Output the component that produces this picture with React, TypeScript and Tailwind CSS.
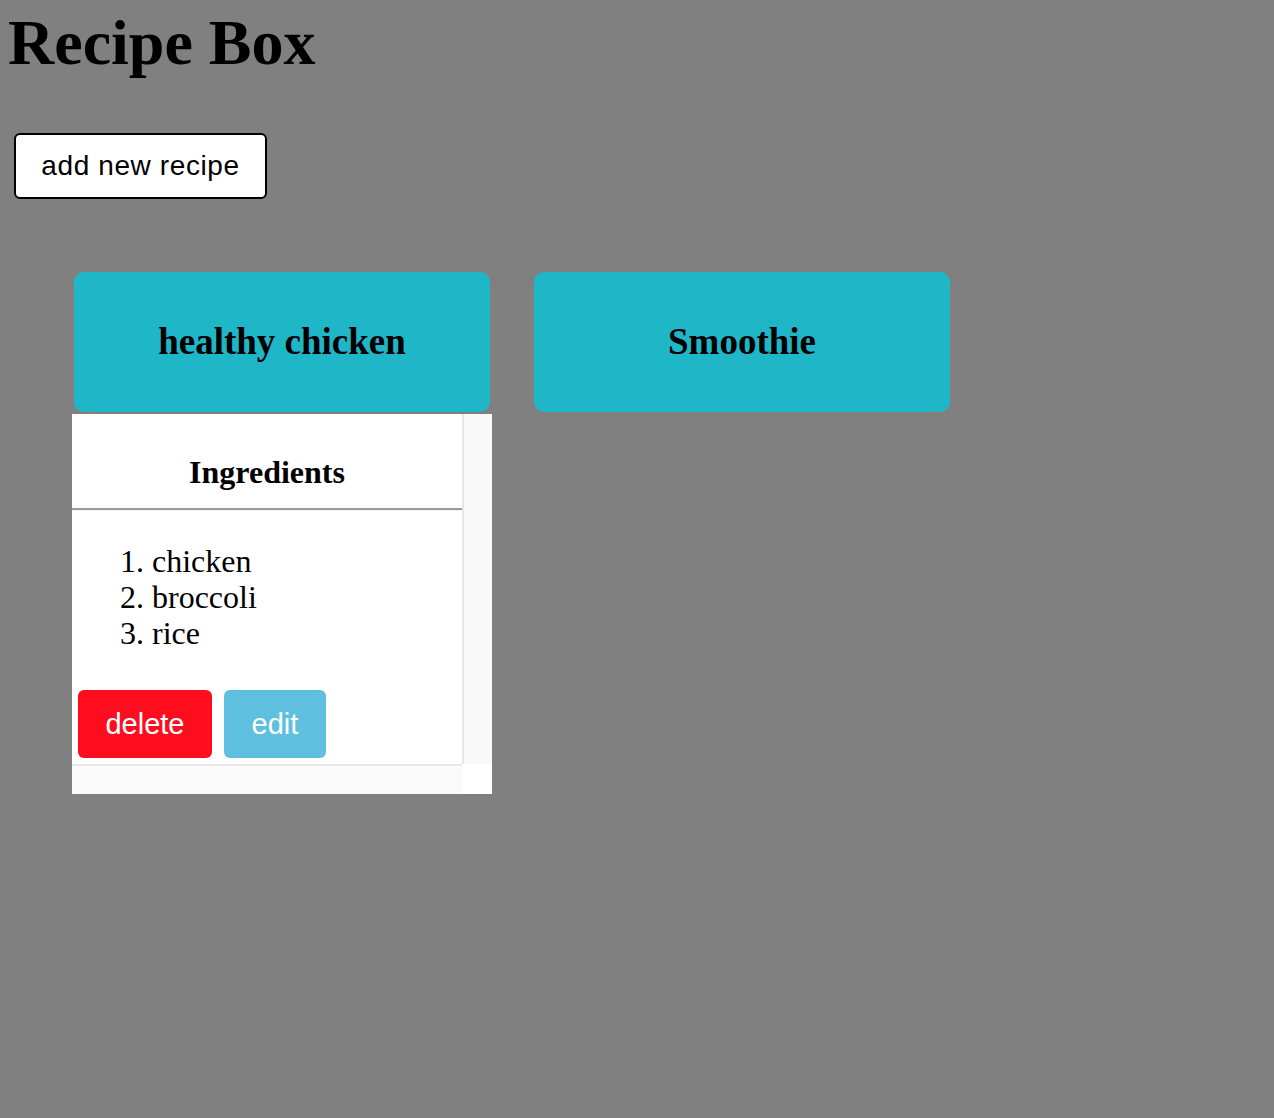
import React from 'react';

interface Recipe {
  id: number;
  name: string;
  ingredients: string[];
}

const recipes: Recipe[] = [
  { id: 1, name: 'healthy chicken', ingredients: ['chicken', 'broccoli', 'rice'] },
  { id: 2, name: 'Smoothie', ingredients: ['banana', 'milk', 'honey'] },
];

const serif = "font-['Liberation_Serif','Times_New_Roman',serif]";
const sans = "font-['Liberation_Sans',Arial,sans-serif]";

function RecipeCard({ recipe, open }: { recipe: Recipe; open: boolean }) {
  return (
    <div className="flex w-[416px] flex-col">
      <div className="flex h-[140px] items-center justify-center rounded-[10px] bg-[#1fb7c8]">
        <h2 className={`${serif} text-[37px] font-bold leading-[1.15] text-black`}>
          {recipe.name}
        </h2>
      </div>
      {open && (
        <div className="-mx-[2px] mt-[2px] flex h-[380px] flex-col bg-white">
          <div className="flex flex-1">
            {/* content */}
            <div className="flex w-[392px] flex-col border-r-2 border-[#e6e6e6] bg-white">
              <h3
                className={`${serif} border-b-2 border-[#9b9b9b] pt-[40px] pb-[18px] text-center text-[32px] font-bold leading-[36px] text-black`}
              >
                Ingredients
              </h3>
              <div className="h-px bg-[#f0f0f0]" />
              <ol
                className={`${serif} mt-[32px] list-decimal pl-[80px] text-[32px] leading-[36px] text-black`}
              >
                {recipe.ingredients.map((item) => (
                  <li key={item}>{item}</li>
                ))}
              </ol>
              <div className={`${sans} mt-[39px] flex gap-[12px] px-[6px]`}>
                <button className="flex h-[68px] w-[134px] items-center justify-center rounded-[6px] bg-[#ff0d1f] text-[29px] leading-[32px] text-white">
                  delete
                </button>
                <button className="flex h-[68px] w-[102px] items-center justify-center rounded-[6px] bg-[#5ec0de] text-[29px] leading-[32px] text-white">
                  edit
                </button>
              </div>
            </div>
            {/* vertical scroll track */}
            <div className="flex-1 bg-[#f9f9f9]" />
          </div>
          <div className="flex h-[30px]">
            <div className="w-[390px] border-t-2 border-[#e8e8e8] bg-[#fafafa]" />
            <div className="flex-1 bg-white" />
          </div>
        </div>
      )}
    </div>
  );
}

export default function App() {
  return (
    <div className="min-h-screen bg-[#808080]">
      <h1 className={`${serif} pt-[6px] pl-[8px] text-[64px] font-bold leading-[74px] text-black`}>
        Recipe Box
      </h1>
      <button
        className={`${sans} mt-[53px] ml-[14px] flex h-[66px] w-[253px] items-center justify-center rounded-[6px] border-2 border-black bg-white text-[28px] leading-[32px] tracking-[0.6px] text-black`}
      >
        add new recipe
      </button>
      <div className="mt-[73px] flex items-start gap-[44px] pl-[74px]">
        {recipes.map((recipe, i) => (
          <RecipeCard key={recipe.id} recipe={recipe} open={i === 0} />
        ))}
      </div>
    </div>
  );
}
